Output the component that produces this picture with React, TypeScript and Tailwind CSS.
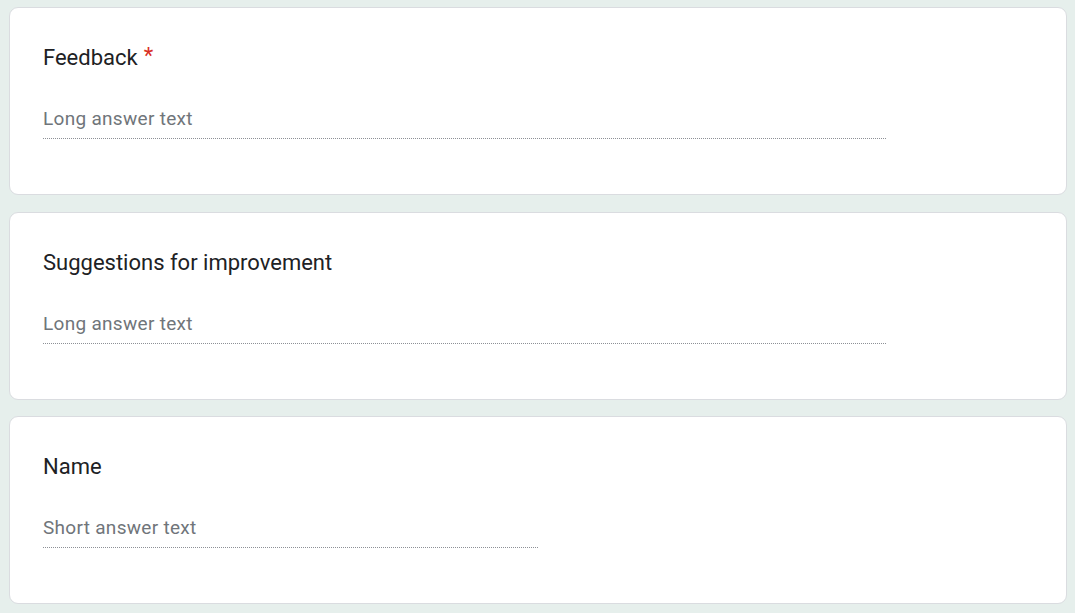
import React from 'react';

type Question = { title: string; required?: boolean; placeholder: string; short?: boolean };

const questions: Question[] = [
  { title: 'Feedback', required: true, placeholder: 'Long answer text' },
  { title: 'Suggestions for improvement', placeholder: 'Long answer text' },
  { title: 'Name', placeholder: 'Short answer text', short: true },
];

const QuestionCard: React.FC<{ q: Question }> = ({ q }) => (
  <div className="bg-white rounded-[9px] border border-[#dadce0] h-[188px] px-[33px] pt-[37px]">
    <div className="text-[22px] leading-[26px] text-[#202124] flex items-start">
      <span>{q.title}</span>
      {q.required && <span className="text-[#d93025] ml-[6px] leading-[22px]">*</span>}
    </div>
    <div className={`mt-[36px] ${q.short ? 'w-[495px]' : 'w-[843px]'} border-b border-dotted border-[#8d9096] pb-[7px]`}>
      <span className="block text-[19px] leading-[24px] text-[#70757a] tracking-[0.3px]">{q.placeholder}</span>
    </div>
  </div>
);

export default function App() {
  return (
    <div className="min-h-screen bg-[#e6efec] pt-[7px] pl-[9px] pr-[8px] pb-[9px] flex flex-col gap-[16.5px]" style={{ fontFamily: 'Roboto, "Liberation Sans", sans-serif' }}>
      {questions.map(q => (
        <QuestionCard key={q.title} q={q} />
      ))}
    </div>
  );
}
